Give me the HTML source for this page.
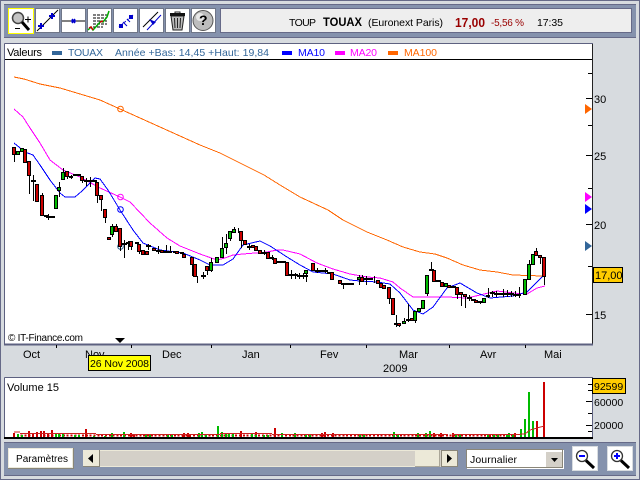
<!DOCTYPE html>
<html><head><meta charset="utf-8"><style>
html,body{margin:0;padding:0;background:#d7dbdf}
svg{display:block;position:absolute;left:0;top:0}
text{font-family:"Liberation Sans",sans-serif;font-size:11px;fill:#000}
</style></head><body>
<svg width="640" height="480" viewBox="0 0 640 480">
<rect width="640" height="480" fill="#d7dbdf"/>
<path d="M.5 .5H639.5V479.5H.5Z" fill="none" stroke="#666a88"/>
<!-- top band -->
<rect x="4" y="4" width="632" height="34" fill="#8592ad"/>
<path d="M4 4.500H636M4 37.500H636" stroke="#666a88"/>
<g shape-rendering="crispEdges">
<rect x="8.500" y="8.500" width="25" height="25" fill="#fff" stroke="#ffff00" stroke-width="1"/>
<g fill="#fff" stroke="#6f7688">
<rect x="35.500" y="8.500" width="24" height="24"/>
<rect x="61.500" y="8.500" width="24" height="24"/>
<rect x="87.500" y="8.500" width="24" height="24"/>
<rect x="113.500" y="8.500" width="24" height="24"/>
<rect x="139.500" y="8.500" width="24" height="24"/>
<rect x="165.500" y="8.500" width="24" height="24"/>
<rect x="191.500" y="8.500" width="24" height="24"/>
</g>
</g>
<!-- icon 1 magnifier -->
<circle cx="18" cy="18" r="5.500" fill="#c4c4c4" stroke="#444" stroke-width="1.500"/>
<path d="M22 22L29 30" stroke="#000" stroke-width="3"/>
<path d="M25 19.500h6M28 16.500v6M15 28.500h5" stroke="#000" stroke-width="1"/>
<!-- icon 2 -->
<path d="M37 31L58 10" stroke="#000"/>
<path d="M49 16h6M52 13v6M38 26h6M41 23v6" stroke="#00c" stroke-width="2"/>
<!-- icon 3 -->
<path d="M62 21H85" stroke="#000"/>
<path d="M71 21h5M72 19l3 4M75 19l-3 4" stroke="#00c" stroke-width="1.500"/>
<!-- icon 4 -->
<path d="M93 15h14M93 18h14M93 21h14M93 24h14M93 27h10" stroke="#000" stroke-dasharray="3 1"/>
<path d="M88 30l3-3 2 3 8-9 2 1 4-5 2-6" fill="none" stroke="#0a0" stroke-width="1.500"/>
<path d="M89 28l2-1 2 3M100 22l3-1" fill="none" stroke="#c00" stroke-width="1.500"/>
<!-- icon 5 -->
<path d="M119 27L133 15" stroke="#00c" stroke-dasharray="2 1.500"/>
<path d="M119 24h4v4h-4zM129 15h4v4h-4z" fill="#00c"/>
<path d="M123 22l4 4M127 19l3 3" stroke="#00c" stroke-width="1"/>
<!-- icon 6 -->
<path d="M143 27L158 12" stroke="#000"/>
<path d="M147 30L161 15" stroke="#00c"/>
<path d="M149 19l7 3-3 3z" fill="#00c"/>
<!-- icon 7 trash -->
<path d="M171 16h13l-2 14h-9z" fill="#bbb" stroke="#222"/>
<path d="M170 14.500h15" stroke="#111" stroke-width="3"/>
<path d="M175 13v-1h5v1" stroke="#222" fill="none"/>
<path d="M174.500 18l.5 10M177.500 18v10M180.500 18l-.5 10" stroke="#222"/>
<!-- icon 8 help -->
<circle cx="203" cy="20.500" r="10" fill="#bdbdbd" stroke="#555"/>
<circle cx="200" cy="17" r="4" fill="#e8e8e8"/>
<text x="199" y="25" style="font-size:14px;font-weight:bold" fill="#222">?</text>
<!-- title -->
<rect x="220.500" y="8.500" width="411" height="24" fill="#eeeeee" stroke="#666a88"/>
<text x="289" y="26" style="font-size:10.500px" textLength="27" lengthAdjust="spacing">TOUP</text>
<text x="323" y="26" style="font-size:12px;font-weight:bold" textLength="39" lengthAdjust="spacingAndGlyphs">TOUAX</text>
<text x="368" y="26" style="font-size:10.500px" textLength="75" lengthAdjust="spacing">(Euronext Paris)</text>
<text x="455" y="27" style="font-size:13px;font-weight:bold;fill:#990000" textLength="30" lengthAdjust="spacingAndGlyphs">17,00</text>
<text x="491" y="26" style="font-size:10px;fill:#990000" textLength="33" lengthAdjust="spacing">-5,56 %</text>
<text x="537" y="26" style="font-size:10.500px" textLength="26" lengthAdjust="spacing">17:35</text>
<!-- chart -->
<rect x="5" y="44" width="587" height="300" fill="#fff"/>
<path d="M4.500 43.500H592.500V345M4.500 43.500V345" fill="none" stroke="#5d6180"/>
<path d="M592.500 44V345" stroke="#222"/>
<path d="M5 59.500H592" stroke="#000"/>
<path d="M4 344.500H593" stroke="#5d6180" stroke-width="2"/>
<path d="M56.500 345v3M131.500 345v3M211.500 345v3M290.500 345v3M366.500 345v3M449.500 345v3M525.500 345v3" stroke="#000"/>
<text x="7" y="56" textLength="35" lengthAdjust="spacing">Valeurs</text>
<rect x="52" y="51" width="10" height="4" fill="#336699"/>
<text x="68" y="56" style="fill:#336699;font-size:10.500px" textLength="35" lengthAdjust="spacing">TOUAX</text>
<text x="115" y="56" style="fill:#336699;font-size:10.500px" textLength="154" lengthAdjust="spacing">Année +Bas: 14,45 +Haut: 19,84</text>
<rect x="282" y="51" width="10" height="4" fill="#0000ff"/>
<text x="298" y="56" style="fill:#0000ff;font-size:10.500px" textLength="27" lengthAdjust="spacing">MA10</text>
<rect x="335" y="51" width="10" height="4" fill="#ff00ff"/>
<text x="350" y="56" style="fill:#ff00ff;font-size:10.500px" textLength="27" lengthAdjust="spacing">MA20</text>
<rect x="388" y="51" width="10" height="4" fill="#ff6600"/>
<text x="404" y="56" style="fill:#ff6600;font-size:10.500px" textLength="33" lengthAdjust="spacing">MA100</text>
<!-- MAs -->
<g fill="none" stroke-width="1" shape-rendering="crispEdges">
<polyline stroke="#ff6600" points="14,77 24,79 40,84 60,88 80,94 100,100 120,109 140,118 160,127 180,136 200,145 220,153 240,163 264,175 280,185 300,197 328,210 343,220 367,232 387,240 403,247 420,252 435,254 447,258 463,265 480,270 497,272 513,275 543,276"/>
<polyline stroke="#ff00ff" points="14,109 23,117 30,128 40,143 50,160 63,170 80,177 100,188 120,197 130,202 150,223 167,238 180,246 200,254 217,260 225,258 233,255 243,254 267,252 277,250 283,250 300,254 317,263 333,269 350,274 367,277 380,278 393,282 400,288 413,297 422,297 447,297 467,298 480,295 497,291 513,293 527,294 537,288 545,286"/>
<polyline stroke="#0000ff" points="14,143 25,152 33,155 40,165 50,180 60,193 65,197 75,197 82,191 90,183 95,178 100,179 108,190 120,210 133,230 143,243 160,250 183,253 200,260 210,265 223,265 233,259 243,245 260,241 270,246 287,257 300,265 313,272 333,274 350,280 360,281 377,282 390,284 400,293 413,310 423,314 433,307 447,288 460,283 477,293 490,298 513,296 527,292 543,276"/>
</g>
<circle cx="120.500" cy="109" r="2.800" fill="none" stroke="#ff6600"/>
<circle cx="120.500" cy="197" r="2.800" fill="none" stroke="#ff00ff"/>
<circle cx="120.500" cy="209.500" r="2.800" fill="none" stroke="#0000ff"/>
<circle cx="120.500" cy="246.500" r="2.800" fill="none" stroke="#336699"/>
<!-- wicks -->
<path stroke="#000" fill="none" shape-rendering="crispEdges" d="M14.500 147V162M33.500 175V201M29.500 175V194M42.500 193V215M48.500 214V220M59.500 182V197M63.500 168V179M67.500 171V179M71.500 175V179M82.500 176V183M86.500 178V186M90.500 177V187M97.500 182V203M101.500 199V211M105.500 217V223M112.500 224V237M116.500 224V231M120.500 228V251M124.500 240V258M128.500 241V250M131.500 246V250M139.500 251V254M148.500 244V250M158.500 246V254M166.500 245V253M170.500 246V252M192.500 264V276M197.500 276V283M203.500 272V279M207.500 270V275M211.500 258V272M222.500 237V257M226.500 234V254M230.500 238V241M234.500 227V232M238.500 228V233M241.500 240V248M249.500 244V250M264.500 250V255M272.500 255V260M291.500 270V279M295.500 273V279M299.500 273V279M303.500 273V279M306.500 272V282M317.500 268V273M325.500 268V273M343.500 284V289M359.500 275V285M362.500 275V281M366.500 276V285M374.500 276V283M389.500 298V304M396.500 315V327M399.500 325V327M404.500 318V323M408.500 304V322M415.500 320V323M427.500 293V296M431.500 262V270M457.500 294V299M461.500 294V306M465.500 296V308M469.500 295V301M480.500 302V304M488.500 288V298M492.500 291V297M496.500 291V297M503.500 289V297M507.500 290V297M511.500 291V297M515.500 291V297M519.500 287V298M529.500 260V264M536.500 248V251M540.500 257V264M544.500 276V285"/>
<!-- dojis -->
<path stroke="#000" stroke-width="2" fill="none" shape-rendering="crispEdges" d="M31 181h5M44 216h4M46 217h5M50 217h5M69 177h4M73 175h4M77 175h4M84 181h4M88 181h5M92 181h5M122 244h5M126 243h5M135 243h4M146 246h5M156 251h5M164 252h5M173 252h5M180 253h4M201 276h5M247 247h5M262 253h5M270 258h4M277 262h5M281 262h5M289 275h5M293 275h5M297 276h5M301 276h5M304 276h4M315 271h5M319 271h5M323 271h5M327 273h5M341 284h4M345 284h5M349 284h5M364 279h5M368 279h5M394 324h5M406 320h4M429 270h5M436 281h5M451 287h5M467 298h5M471 300h5M478 302h4M486 296h4M490 293h5M494 294h5M497 294h5M501 294h5M505 294h5M509 294h5M513 295h5M517 295h4"/>
<!-- red -->
<path fill="#cc0000" stroke="#000" shape-rendering="crispEdges" d="M12.500 147.500h3v7h-3zM23.500 149.500h3v13h-3zM27.500 161.500h3v14h-3zM35.500 184.500h3v17h-3zM40.500 195.500h3v20h-3zM65.500 171.500h3v5h-3zM80.500 176.500h3v4h-3zM95.500 182.500h3v13h-3zM99.500 195.500h3v4h-3zM103.500 209.500h3v8h-3zM107.500 237.500h3v2h-3zM114.500 226.500h3v5h-3zM118.500 228.500h3v18h-3zM129.500 241.500h3v5h-3zM137.500 244.500h3v7h-3zM141.500 250.500h3v4h-3zM145.500 251.500h3v3h-3zM152.500 248.500h3v2h-3zM160.500 250.500h3v2h-3zM175.500 251.500h3v2h-3zM182.500 254.500h3v3h-3zM190.500 257.500h3v7h-3zM193.500 264.500h3v12h-3zM205.500 266.500h3v4h-3zM239.500 231.500h3v9h-3zM243.500 240.500h3v4h-3zM251.500 245.500h3v2h-3zM254.500 246.500h3v4h-3zM258.500 250.500h3v3h-3zM266.500 252.500h3v6h-3zM273.500 258.500h3v5h-3zM285.500 262.500h3v13h-3zM311.500 263.500h3v7h-3zM330.500 272.500h3v7h-3zM338.500 280.500h3v3h-3zM360.500 277.500h3v4h-3zM376.500 280.500h3v3h-3zM379.500 283.500h3v4h-3zM382.500 285.500h3v3h-3zM387.500 287.500h3v11h-3zM391.500 298.500h3v16h-3zM397.500 323.500h3v2h-3zM410.500 318.500h3v2h-3zM432.500 270.500h3v11h-3zM440.500 282.500h3v4h-3zM447.500 285.500h3v2h-3zM455.500 287.500h3v7h-3zM459.500 292.500h3v2h-3zM463.500 294.500h3v2h-3zM474.500 300.500h3v2h-3zM534.500 251.500h3v4h-3zM538.500 255.500h3v2h-3zM542.500 257.500h3v19h-3z"/>
<!-- green -->
<path fill="#00bb00" stroke="#000" shape-rendering="crispEdges" d="M16.500 151.500h3v3h-3zM20.500 148.500h3v3h-3zM54.500 195.500h3v13h-3zM57.500 187.500h3v3h-3zM61.500 172.500h3v7h-3zM110.500 226.500h3v8h-3zM168.500 251.500h3v1h-3zM209.500 262.500h3v8h-3zM215.500 257.500h3v5h-3zM220.500 248.500h3v9h-3zM224.500 243.500h3v4h-3zM228.500 231.500h3v7h-3zM232.500 229.500h3v3h-3zM304.500 270.500h3v3h-3zM357.500 277.500h3v2h-3zM402.500 321.500h3v2h-3zM413.500 311.500h3v9h-3zM417.500 308.500h3v3h-3zM421.500 300.500h3v8h-3zM425.500 275.500h3v18h-3zM444.500 283.500h3v3h-3zM482.500 298.500h3v4h-3zM523.500 279.500h3v15h-3zM527.500 264.500h3v15h-3zM531.500 254.500h3v10h-3z"/>
<!-- axis -->
<path stroke="#000" d="M588 73.500h4M586 98.500h6M588 125.500h4M586 155.500h6M588 188.500h4M586 224.500h6M588 266.500h4M586 314.500h6"/>
<text x="594" y="103">30</text><text x="594" y="160">25</text><text x="594" y="229">20</text><text x="594" y="319">15</text>
<path d="M585 104l7 5-7 5z" fill="#ff6600"/>
<path d="M585 192l7 5-7 5z" fill="#ff00ff"/>
<path d="M585 204l7 5-7 5z" fill="#0000ff"/>
<path d="M585 241l7 5-7 5z" fill="#336699"/>
<rect x="593.500" y="267.500" width="29" height="15" fill="#ffcc00" stroke="#000"/>
<text x="595" y="279">17,00</text>
<!-- labels -->
<text x="23" y="358">Oct</text><text x="85" y="358">Nov</text><text x="162" y="358">Dec</text><text x="242" y="358">Jan</text><text x="320" y="358">Fev</text><text x="399" y="358">Mar</text><text x="480" y="358">Avr</text><text x="544" y="358">Mai</text>
<text x="383" y="372">2009</text>
<rect x="88.500" y="355.500" width="62" height="15" fill="#ffff00" stroke="#000"/>
<text x="90" y="367" style="font-size:10.500px" textLength="59" lengthAdjust="spacing">26 Nov 2008</text>
<path d="M115 338h10l-5 5z" fill="#000"/>
<text x="8" y="341" style="font-size:10px" textLength="75" lengthAdjust="spacing">© IT-Finance.com</text>
<!-- volume -->
<rect x="5" y="378" width="587" height="60" fill="#fff"/>
<path d="M4.500 377.500H592.500V439M4.500 377.500V439" fill="none" stroke="#5d6180"/>
<text x="7" y="391">Volume 15</text>
<g shape-rendering="crispEdges">
<path d="M13 435.500H515" stroke="#cc0000" stroke-width="2" stroke-dasharray="2 1.830" fill="none"/>
<path stroke="#cc0000" stroke-width="2" d="M14 438V433M29 438V431M33 438V433M37 438V432M41 438V431M44 438V431M48 438V433M52 438V430M86 438V429M131 438V433M241 438V431M275 438V428M183 438V434M190 438V434M134 438V434M184 438V433M256 438V432M188 438V433M322 438V433M325 438V432M333 438V433M441 438V433M453 438V433M490 438V435M544 438V382M537 438V421M515 438V433M434 438V433"/>
<path stroke="#00bb00" stroke-width="2" d="M18 438V434M22 438V435M56 438V433M59 438V433M63 438V433M75 438V435M79 438V435M94 438V436M105 438V436M112 438V433M124 438V432M146 438V435M150 438V435M168 438V435M172 438V435M199 438V433M202 438V432M206 438V435M218 438V426M222 438V432M226 438V433M229 438V433M233 438V433M252 438V433M256 438V435M264 438V435M268 438V435M282 438V433M295 438V433M306 438V435M310 438V435M418 438V433M426 438V433M430 438V431M360 438V435M364 438V435M394 438V432M398 438V435M456 438V434M460 438V434M488 438V434M494 438V435M498 438V435M507 438V435M509 438V433M513 438V435M521 438V429M525 438V419M529 438V392M533 438V421"/>
<path stroke="#000" stroke-width="2" d="M4 438H593"/>
</g>
<path fill="none" stroke="#cc2222" shape-rendering="crispEdges" d="M14 432H20M20 433.500H96M96 434.500H220M220 433.500H272M272 434.500H308M308 434.500H400M400 434.500H445M445 434.500H448M452 434.500H516L525 434 530 430 537 428 544 426"/>
<path stroke="#000" d="M588 384.500h4M588 390.500h4M586 401.500h6M588 413.500h4M586 425.500h6M588 431.500h4"/>
<rect x="592.500" y="378.500" width="33" height="15" fill="#ffcc00" stroke="#000"/>
<text x="594" y="390" style="font-size:10.500px">92599</text>
<text x="594" y="406" style="font-size:10.500px">60000</text>
<text x="594" y="429" style="font-size:10.500px">20000</text>
<!-- bottom band -->
<rect x="4" y="442" width="632" height="34" fill="#8592ad"/>
<path d="M4 442.500H636M4 475.500H636" stroke="#666a88"/>
<g shape-rendering="crispEdges">
<rect x="8" y="448" width="66" height="21" fill="#8a8678"/>
<rect x="8" y="448" width="65" height="20" fill="#eceadc"/>
<rect x="9" y="449" width="63" height="18" fill="#fff"/>
<rect x="83" y="450" width="375" height="17" fill="#d4d0c8"/>
<rect x="100" y="451" width="315" height="14" fill="#d4d0c8"/>
<path d="M100 450.500H415M100 466.500H415" stroke="#ece9d8"/>
<rect x="83" y="450" width="17" height="17" fill="#8a8678"/>
<rect x="83" y="450" width="16" height="16" fill="#ece9d8"/>
<rect x="415" y="450" width="25" height="17" fill="#ece9d8"/>
<path d="M415 466.500H440M439.500 450V467" stroke="#aaa698"/>
<rect x="441" y="450" width="17" height="17" fill="#8a8678"/>
<rect x="442" y="451" width="15" height="15" fill="#ece9d8"/>
<rect x="467" y="450" width="97" height="19" fill="#fff"/>
<rect x="466.500" y="449.500" width="96" height="18" fill="#fff" stroke="#8a8678"/>
<rect x="546" y="452" width="16" height="15" fill="#d4d0c8"/>
<rect x="572.500" y="446.500" width="25" height="24" fill="#fff" stroke="#d8dce0"/>
<rect x="607.500" y="446.500" width="25" height="24" fill="#fff" stroke="#d8dce0"/>
</g>
<text x="16" y="462" style="font-size:10px" textLength="52" lengthAdjust="spacing">Paramètres</text>
<path d="M93 454v9l-5-4.500zM447 454v9l5-4.500z" fill="#000"/>
<path d="M551 458h7l-3.500 4z" fill="#000"/>
<text x="470" y="463" style="font-size:10.500px" textLength="47" lengthAdjust="spacing">Journalier</text>
<circle cx="582" cy="456" r="5.500" fill="#fff" stroke="#333" stroke-width="1.300"/>
<path d="M579 456h6" stroke="#00f" stroke-width="2"/>
<path d="M586 460.500L594 468" stroke="#000" stroke-width="3"/>
<circle cx="617" cy="456" r="5.500" fill="#fff" stroke="#333" stroke-width="1.300"/>
<path d="M614 456h6M617 453v6" stroke="#00f" stroke-width="2"/>
<path d="M621 460.500L629 468" stroke="#000" stroke-width="3"/>
</svg>
</body></html>
